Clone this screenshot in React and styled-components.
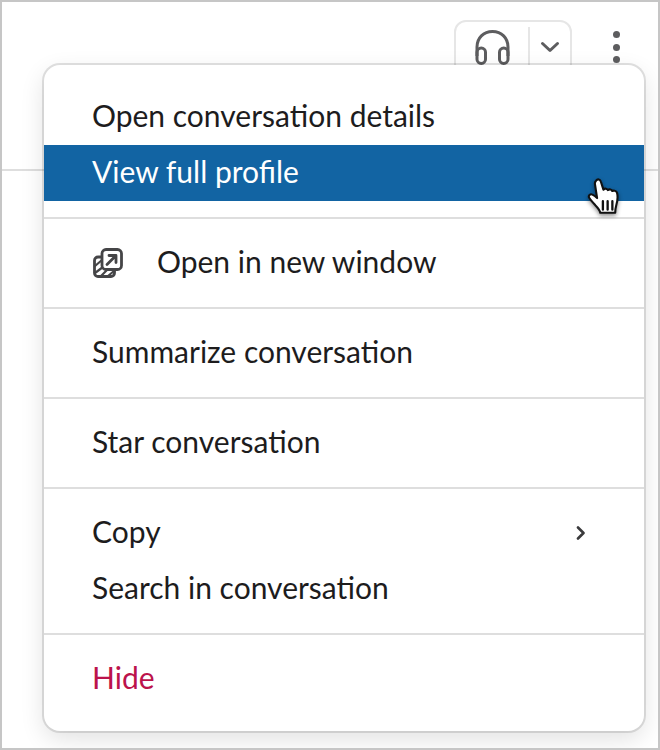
import React from "react";
import styled, { createGlobalStyle } from "styled-components";

const GlobalStyle = createGlobalStyle`
  html, body {
    margin: 0;
    padding: 0;
    background: #fff;
  }
`;

const Frame = styled.div`
  position: relative;
  box-sizing: border-box;
  width: 660px;
  height: 750px;
  border: 2px solid #c6c6c6;
  background: #fff;
  overflow: hidden;
  font-family: Lato, "Liberation Sans", sans-serif;
`;

const Header = styled.header`
  box-sizing: border-box;
  height: 169px;
  border-bottom: 2px solid #dedede;
  display: flex;
  justify-content: flex-end;
  align-items: flex-start;
  gap: 38px;
  padding: 18px 36px 0 0;
`;

const CallGroup = styled.div`
  box-sizing: border-box;
  width: 118px;
  height: 56px;
  display: flex;
  align-items: center;
  border: 2px solid #e6e6e6;
  border-radius: 12px;
`;

const CallButton = styled.div`
  width: 72px;
  height: 100%;
  display: flex;
  align-items: center;
  justify-content: center;
  padding-bottom: 2px;
  box-sizing: border-box;
  color: #5d5d5f;
`;

const CaretButton = styled.div`
  flex: 1;
  height: 42px;
  box-sizing: border-box;
  padding-bottom: 2px;
  border-left: 2px solid #e6e6e6;
  display: flex;
  align-items: center;
  justify-content: center;
  color: #5d5d5f;
`;

const MoreButton = styled.div`
  width: 12px;
  display: flex;
  flex-direction: column;
  align-items: center;
  gap: 5.500px;
  padding-top: 11px;
`;

const Dot = styled.span`
  width: 7px;
  height: 7px;
  border-radius: 50%;
  background: #5d5d5f;
`;

const Menu = styled.nav`
  position: absolute;
  left: 42px;
  top: 63px;
  box-sizing: border-box;
  width: 600px;
  padding: 24px 0;
  background: #fff;
  border-radius: 16px;
  box-shadow: 0 0 0 2px rgba(29, 28, 29, 0.13), 0 8px 24px rgba(0, 0, 0, 0.12);
`;

const Item = styled.div`
  position: relative;
  box-sizing: border-box;
  height: 56px;
  padding: 0 48px 4px;
  display: flex;
  align-items: center;
  justify-content: space-between;
  font-size: 30px;
  color: ${(p) => (p.$danger ? "#bc134b" : "#1d1c1d")};
  background: ${(p) => (p.$active ? "#1264a3" : "transparent")};
  ${(p) => p.$active && "color: #fff;"}
`;

const ItemLabel = styled.span`
  display: flex;
  align-items: center;
  gap: 34px;
  font-variant-ligatures: common-ligatures;
`;

const IconSlot = styled.span`
  display: flex;
  margin-top: 4px;
  margin-left: ${(p) => p.$left || 0}px;
  margin-right: ${(p) => p.$right || 0}px;
`;

const Divider = styled.div`
  height: 2px;
  margin: 16px 0;
  background: #dedede;
`;

const Pointer = styled.svg`
  position: absolute;
  left: 543px;
  top: 32px;
  filter: drop-shadow(0 2px 2px rgba(0, 0, 0, 0.45));
`;

function Headphones() {
  return (
    <svg width="35" height="35" viewBox="0 0 35 35" fill="none" stroke="currentColor" strokeWidth="3">
      <path d="M2 26V17C2 8 8.500 1.500 17.500 1.500S33 8 33 17v9" />
      <rect x="2" y="18" width="8.500" height="15.500" rx="4.250" />
      <rect x="24.500" y="18" width="8.500" height="15.500" rx="4.250" />
    </svg>
  );
}

function Caret() {
  return (
    <svg width="20" height="12" viewBox="0 0 20 12" fill="none" stroke="currentColor" strokeWidth="3" strokeLinecap="round" strokeLinejoin="round">
      <path d="M2.500 2.500L10 9.500l7.500-7" />
    </svg>
  );
}

function NewWindowIcon() {
  return (
    <svg width="30" height="30" viewBox="0 0 30 30" fill="none" stroke="#454547" strokeWidth="2.800" strokeLinecap="round" strokeLinejoin="round">
      <path d="M9 9H5a3.500 3.500 0 0 0-3.500 3.500V25A3.500 3.500 0 0 0 5 28.500h13a3.500 3.500 0 0 0 3.500-3.500v-3" />
      <path d="M2 18l7-6M2 25l8-6M8 28l6-6M15 28l6-5" strokeWidth="2.200" />
      <rect x="9" y="1.500" width="19.500" height="20" rx="4" fill="#fff" />
      <path d="M14 16.500l8.500-8.500M16 7.500h7v7" />
    </svg>
  );
}

function ChevronRight() {
  return (
    <svg width="10" height="14" viewBox="0 0 10 14" fill="none" stroke="#3a3a3c" strokeWidth="2.600" strokeLinecap="round" strokeLinejoin="round">
      <path d="M2 1.500L7.500 7 2 12.500" />
    </svg>
  );
}

function HandCursor() {
  return (
    <Pointer width="36" height="40" viewBox="0 0 34 38">
      <path
        d="M8.500 3.500c1.500-2 4-1.500 4.600 1l2.400 7.500c1.500-1.500 3.500-1 4.200.5 1.500-1.200 3.500-.8 4.200.8 1.700-.8 4-.2 4.600 2 .8 3.500.3 8-.8 11.500-.7 2.500-1 4.500-1 7.200H12.500c-.5-3-2-4.500-4.500-7-2-2.200-4.500-4.800-6-7.300-1.200-2 1-4 3-3 1.500.7 3 1.800 4.500 3.300L7.500 7c-.3-1.300 0-2.500 1-3.500z"
        fill="#fff"
        stroke="#111"
        strokeWidth="2"
        strokeLinejoin="round"
      />
      <path d="M15 23v8M19.500 23v8M24 23v8" stroke="#111" strokeWidth="2.200" strokeLinecap="round" />
    </Pointer>
  );
}

export default function App() {
  return (
    <>
      <GlobalStyle />
      <Frame>
        <Header>
          <CallGroup>
            <CallButton>
              <Headphones />
            </CallButton>
            <CaretButton>
              <Caret />
            </CaretButton>
          </CallGroup>
          <MoreButton>
            <Dot />
            <Dot />
            <Dot />
          </MoreButton>
        </Header>
        <Menu>
          <Item>Open conversation details</Item>
          <Item $active>
            View full profile
            <HandCursor />
          </Item>
          <Divider />
          <Item>
            <ItemLabel>
              <IconSlot $left={1}>
                <NewWindowIcon />
              </IconSlot>
              Open in new window
            </ItemLabel>
          </Item>
          <Divider />
          <Item>Summarize conversation</Item>
          <Divider />
          <Item>Star conversation</Item>
          <Divider />
          <Item>
            Copy
            <IconSlot $right={10}>
              <ChevronRight />
            </IconSlot>
          </Item>
          <Item>Search in conversation</Item>
          <Divider />
          <Item $danger>Hide</Item>
        </Menu>
      </Frame>
    </>
  );
}
